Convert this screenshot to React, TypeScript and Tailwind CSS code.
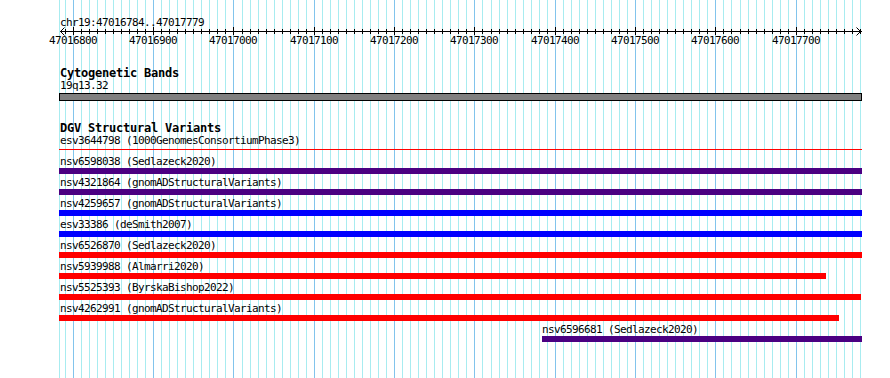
import React from "react";

const START = 47016784;
const scale = (bp: number) => 60.5 + (bp - START) * 0.8032;

const gridBps = Array.from({ length: 100 }, (_, k) => 47016790 + 10 * k);

function GridLayer() {
  return (
    <svg className="absolute left-0 top-0" width={890} height={378}>
      <rect x={59} y={0} width={1} height={378} fill="#a8ecf0" />
      {gridBps.map((bp) => (
        <rect
          key={bp}
          x={Math.floor(scale(bp))}
          y={0}
          width={1}
          height={378}
          fill={bp % 100 === 0 ? "#82c4ec" : "#a8ecf0"}
        />
      ))}
    </svg>
  );
}

function Ruler() {
  return (
    <svg className="block overflow-visible" width={890} height={20}>
      <rect x={60} y={3} width={802} height={1} fill="#000" />
      <polyline points="64.5,-0.5 60.5,3.5 64.5,7.5" fill="none" stroke="#000" strokeWidth={1} />
      <polyline points="856.5,-0.5 860.5,3.5 856.5,7.5" fill="none" stroke="#000" strokeWidth={1} />
      {gridBps.map((bp) => {
        const x = Math.floor(scale(bp));
        const major = bp % 100 === 0;
        return major ? (
          <g key={bp}>
            <rect x={x} y={-1} width={1} height={8} fill="#000" />
            <text x={x} y={16} fontSize={11} letterSpacing={-0.62} textAnchor="middle" fill="#000">
              {bp}
            </text>
          </g>
        ) : (
          <rect key={bp} x={x} y={1} width={1} height={5} fill="#000" />
        );
      })}
    </svg>
  );
}

type Variant = {
  label: string;
  color: string;
  left: number;
  width: number;
  line?: boolean;
};

const variants: Variant[] = [
  { label: "esv3644798 (1000GenomesConsortiumPhase3)", color: "#ff0000", left: 59, width: 803, line: true },
  { label: "nsv6598038 (Sedlazeck2020)", color: "#4b0082", left: 59, width: 803 },
  { label: "nsv4321864 (gnomADStructuralVariants)", color: "#4b0082", left: 59, width: 803 },
  { label: "nsv4259657 (gnomADStructuralVariants)", color: "#0000ff", left: 59, width: 803 },
  { label: "esv33386 (deSmith2007)", color: "#0000ff", left: 59, width: 803 },
  { label: "nsv6526870 (Sedlazeck2020)", color: "#ff0000", left: 59, width: 803 },
  { label: "nsv5939988 (Almarri2020)", color: "#ff0000", left: 59, width: 767 },
  { label: "nsv5525393 (ByrskaBishop2022)", color: "#ff0000", left: 59, width: 802 },
  { label: "nsv4262991 (gnomADStructuralVariants)", color: "#ff0000", left: 59, width: 780 },
  { label: "nsv6596681 (Sedlazeck2020)", color: "#4b0082", left: 542, width: 320 },
];

function VariantRow({ v }: { v: Variant }) {
  return (
    <div className="h-[21px]">
      <div
        className="text-[11px] tracking-[-0.62px] leading-[12px] whitespace-pre"
        style={{ paddingLeft: v.left === 59 ? 60 : v.left }}
      >
        {v.label}
      </div>
      {v.line ? (
        <div className="h-[6px] pt-[2px]">
          <div className="h-[1px]" style={{ marginLeft: v.left, width: v.width, backgroundColor: v.color }} />
        </div>
      ) : (
        <div className="h-[6px]" style={{ marginLeft: v.left, width: v.width, backgroundColor: v.color }} />
      )}
    </div>
  );
}

export default function App() {
  return (
    <div className="relative w-[890px] h-[378px] overflow-hidden bg-white text-black font-['DejaVu_Sans_Mono',monospace]">
      <GridLayer />
      <div className="relative">
        <div className="pt-[17px] pl-[60px] text-[11px] tracking-[-0.62px] leading-[11px]">chr19:47016784..47017779</div>
        <Ruler />
        <section className="mt-[18px]">
          <div className="pl-[60px] text-[12px] tracking-[-0.22px] font-bold leading-[14px]">Cytogenetic Bands</div>
          <div className="pl-[60px] text-[11px] tracking-[-0.62px] leading-[11px]">19q13.32</div>
          <div className="mt-[2px] ml-[59px] w-[803px] h-[8px] border border-black bg-[#808080]" />
        </section>
        <section className="mt-[20px]">
          <div className="pl-[60px] text-[12px] tracking-[-0.22px] font-bold leading-[14px]">DGV Structural Variants</div>
          <div>
            {variants.map((v) => (
              <VariantRow key={v.label} v={v} />
            ))}
          </div>
        </section>
      </div>
    </div>
  );
}
